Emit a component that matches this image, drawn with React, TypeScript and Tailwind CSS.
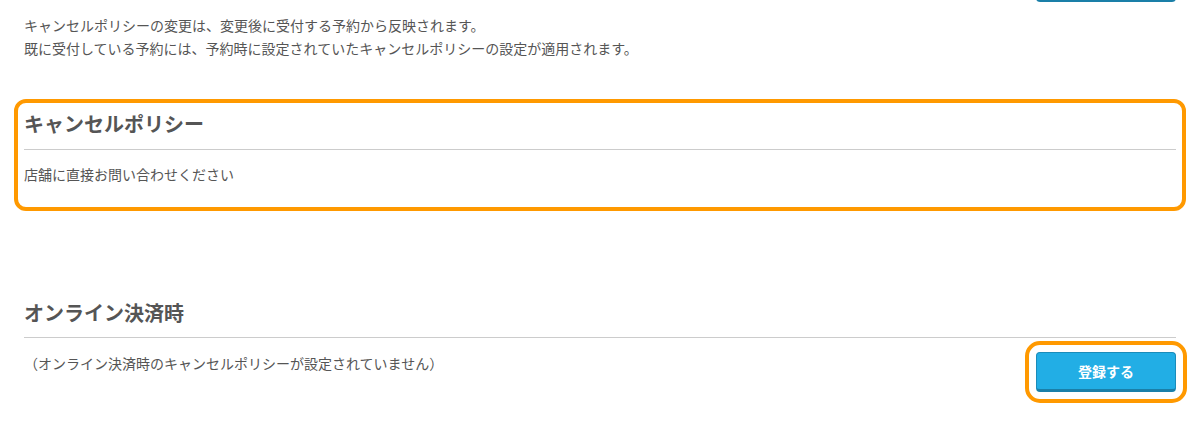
import React from "react";

const FONT = { fontFamily: '"Noto Sans CJK JP", "Noto Sans", sans-serif' };

function BlueButton({ label, className = "" }: { label?: string; className?: string }) {
  return (
    <button
      type="button"
      className={`flex h-[40px] w-[140px] items-center justify-center rounded-[4px] border border-[#1b8cba] border-b-[3px] border-b-[#1a7fa8] bg-[#22aee5] text-[14px] font-bold text-white ${className}`}
    >
      {label}
    </button>
  );
}

export default function App() {
  return (
    <div className="min-h-[422px] overflow-hidden bg-white px-[24px] text-[#555]" style={FONT}>
      {/* the previous section's button, mostly scrolled out of view */}
      <div className="flex justify-end">
        <BlueButton className="-mt-[38px]" />
      </div>

      <div className="mt-[12px] text-[14px] leading-[23px]">
        <p>キャンセルポリシーの変更は、変更後に受付する予約から反映されます。</p>
        <p>既に受付している予約には、予約時に設定されていたキャンセルポリシーの設定が適用されます。</p>
      </div>

      {/* current policy — highlighted */}
      <section className="mt-[49px] rounded-[2px] pb-[15px] outline-4 outline-offset-[6px] outline-[#ff9900]">
        <h2 className="border-b border-[#cccccc] pb-[10px] text-[20px] font-bold leading-[30px]">
          キャンセルポリシー
        </h2>
        <p className="mt-[13px] text-[14px] leading-[23px]">店舗に直接お問い合わせください</p>
      </section>

      {/* online payment */}
      <section className="mt-[97px]">
        <h2 className="border-b border-[#cccccc] pb-[9px] text-[20px] font-bold leading-[30px]">
          オンライン決済時
        </h2>
        <div className="mt-[14px] flex items-start justify-between">
          <p className="text-[14px] leading-[23px]">（オンライン決済時のキャンセルポリシーが設定されていません）</p>
          <BlueButton
            label="登録する"
            className="outline-4 outline-offset-[7px] outline-[#ff9900]"
          />
        </div>
      </section>
    </div>
  );
}
